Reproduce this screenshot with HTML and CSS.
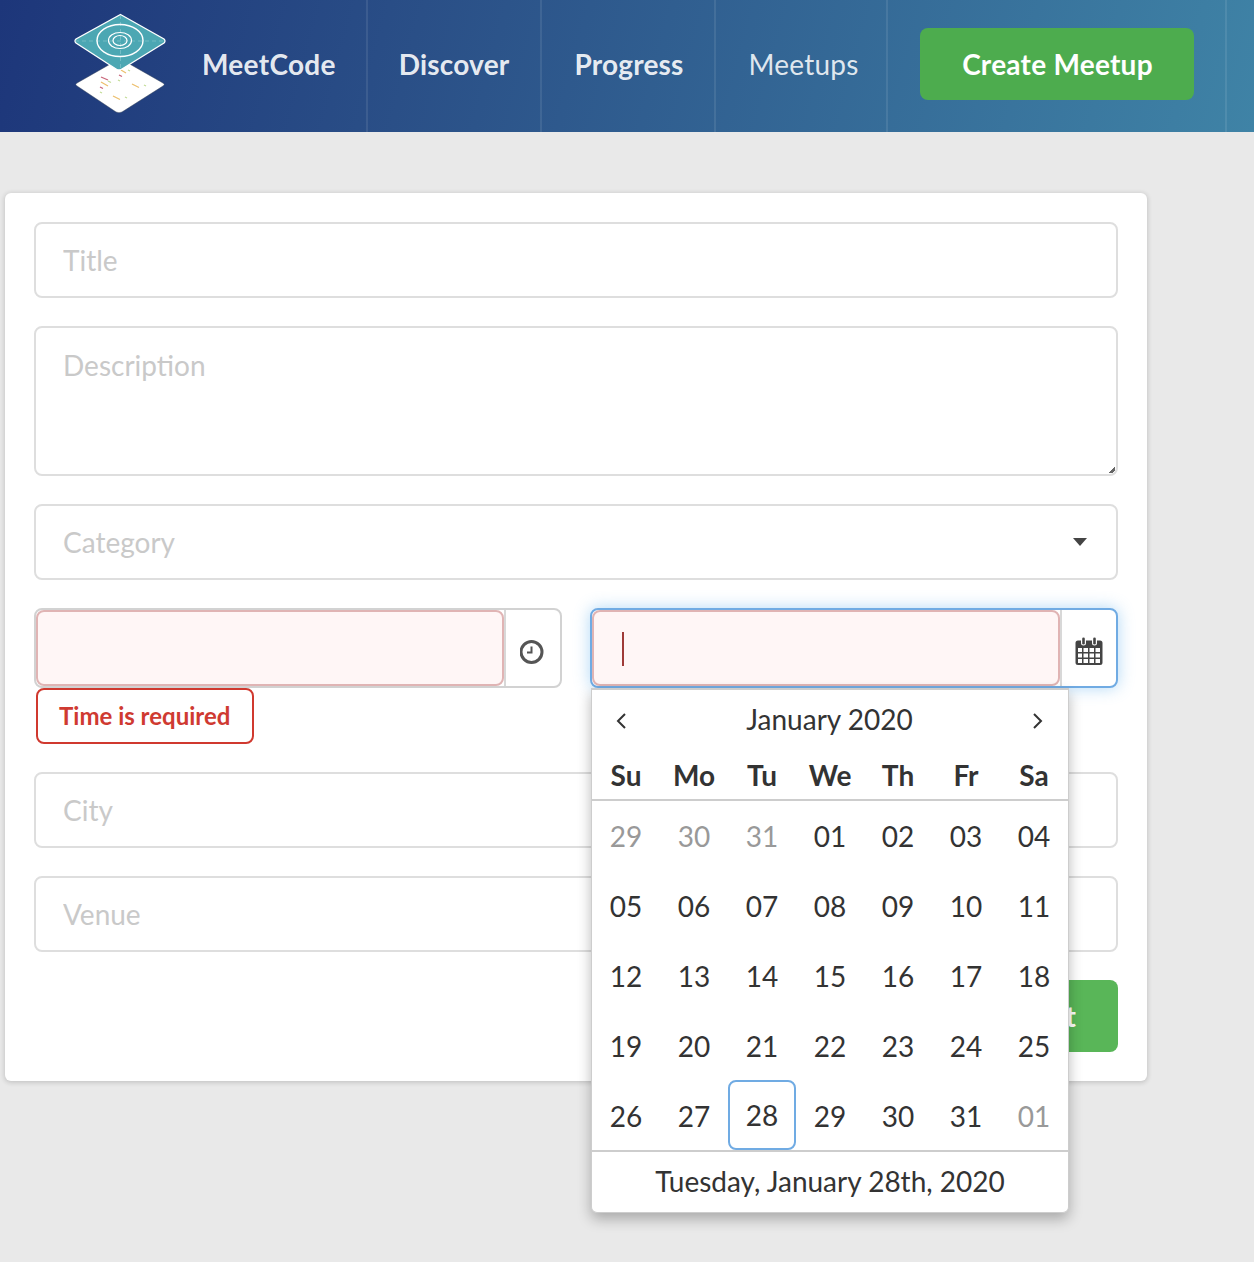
FILE: index.html
```html
<!DOCTYPE html>
<html lang="en">
<head>
<meta charset="utf-8">
<title>MeetCode</title>
<link rel="stylesheet" href="styles.css">
</head>
<body>
<nav class="nav">
  <a class="nav-item brand">
    <svg class="logo" width="92" height="102" viewBox="74 13 92 102">
      <path d="M120 58.500 L163 83 Q165.500 84.500 163 86 L122 112 Q119 113.500 116 112 L77 86 Q74.500 84.500 77 83 Z" fill="#fff" stroke="#2a3a55" stroke-width=".5"/>
      <g stroke-width="1.300" fill="none">
        <path d="M101 77 L108 80 M100 87 L103 88.500 M119 75 L122 76.500" stroke="#c9667a"/>
        <path d="M121 70 L126 73 M101 82 L108 86 M132 84 L139 87.500 M113 96 L120 99.500" stroke="#ecc06e"/>
        <path d="M108 81 L111 82.500 M118 80 L120 81 M144 85 L146 86 M100 92 L102 93 M125 97 L127 98 M128 70 L130 71" stroke="#c3dc96"/>
      </g>
      <path d="M120.500 14.500 L164 39 Q166 41 164 43 L122 69 Q119 71 116 69 L76 43 Q74 41 76 39 Z" fill="#4ca7b3" stroke="#fff" stroke-width="1.300"/>
      <path d="M120.500 15 V69 M75 41 H165" stroke="#8fcbd2" stroke-width=".6" stroke-dasharray="4 3" fill="none"/>
      <ellipse cx="120" cy="40.500" rx="23" ry="16" fill="none" stroke="#fff" stroke-width="1.400"/>
      <ellipse cx="120" cy="40.500" rx="11.500" ry="8" fill="none" stroke="#fff" stroke-width="1.200"/>
      <ellipse cx="120" cy="40.500" rx="7" ry="5" fill="none" stroke="#fff" stroke-width="1.200"/>
    </svg>
    <span class="brand-name">MeetCode</span>
  </a>
  <a class="nav-item nav-item-discover">Discover</a>
  <a class="nav-item nav-item-progress">Progress</a>
  <a class="nav-item nav-item-light">Meetups</a>
  <div class="nav-item"><button class="create-btn">Create Meetup</button></div>
</nav>

<main class="page">
  <form class="card">
    <input class="input" placeholder="Title">
    <textarea class="input textarea" placeholder="Description"></textarea>
    <div class="input select">
      <span class="select-text">Category</span>
      <span class="caret-down"></span>
    </div>
    <div class="row">
      <div class="field">
        <div class="group">
          <input class="group-input">
          <span class="group-btn">
            <svg width="26" height="26" viewBox="1.500 -1 26 26" fill="none" stroke="#555">
              <circle cx="13" cy="13" r="10.500" stroke-width="3"/>
              <path d="M13 7.500 V13.500 H8.500" stroke-width="2"/>
            </svg>
          </span>
        </div>
        <div class="error">Time is required</div>
      </div>
      <div class="field date-field">
        <div class="group group-focus">
          <input class="group-input">
          <span class="text-caret"></span>
          <span class="group-btn">
            <svg width="28" height="29" viewBox="0 0 28 29">
              <path fill="#444" fill-rule="evenodd" d="M3 3.500 H6 V6 a2.500 2.500 0 0 0 5 0 V3.500 H17 V6 a2.500 2.500 0 0 0 5 0 V3.500 H25 a2.500 2.500 0 0 1 2.500 2.500 V25.500 a2.500 2.500 0 0 1 -2.500 2.500 H3 a2.500 2.500 0 0 1 -2.500 -2.500 V6 a2.500 2.500 0 0 1 2.500 -2.500 Z M3 11 V15 H7 V11 Z M8.500 11 V15 H13 V11 Z M14.500 11 V15 H19 V11 Z M20.500 11 V15 H25 V11 Z M3 16.500 V20.500 H7 V16.500 Z M8.500 16.500 V20.500 H13 V16.500 Z M14.500 16.500 V20.500 H19 V16.500 Z M20.500 16.500 V20.500 H25 V16.500 Z M3 22 V26 H7 V22 Z M8.500 22 V26 H13 V22 Z M14.500 22 V26 H19 V22 Z M20.500 22 V26 H25 V22 Z"/>
              <rect x="7.200" y="0.500" width="2.600" height="7" rx="1.300" fill="#444"/>
              <rect x="18.200" y="0.500" width="2.600" height="7" rx="1.300" fill="#444"/>
            </svg>
          </span>
        </div>
        <div class="calendar">
          <div class="cal-head">
            <svg class="chev" width="12" height="18" viewBox="0 0 12 18" fill="none" stroke="#333" stroke-width="2"><path d="M10 2 L3 9 L10 16"/></svg>
            <span>January 2020</span>
            <svg class="chev" width="12" height="18" viewBox="0 0 12 18" fill="none" stroke="#333" stroke-width="2"><path d="M2 2 L9 9 L2 16"/></svg>
          </div>
          <div class="cal-weekdays">
            <span>Su</span><span>Mo</span><span>Tu</span><span>We</span><span>Th</span><span>Fr</span><span>Sa</span>
          </div>
          <div class="cal-grid">
            <span class="muted">29</span><span class="muted">30</span><span class="muted">31</span><span>01</span><span>02</span><span>03</span><span>04</span>
            <span>05</span><span>06</span><span>07</span><span>08</span><span>09</span><span>10</span><span>11</span>
            <span>12</span><span>13</span><span>14</span><span>15</span><span>16</span><span>17</span><span>18</span>
            <span>19</span><span>20</span><span>21</span><span>22</span><span>23</span><span>24</span><span>25</span>
            <span>26</span><span>27</span><span class="selected">28</span><span>29</span><span>30</span><span>31</span><span class="muted">01</span>
          </div>
          <div class="cal-foot">Tuesday, January 28th, 2020</div>
        </div>
      </div>
    </div>
    <input class="input" placeholder="City">
    <input class="input" placeholder="Venue">
    <div class="actions"><button type="button" class="submit">Submit</button></div>
  </form>
</main>
</body>
</html>
```

FILE: styles.css
```css
* { box-sizing: border-box; }
html, body { margin: 0; padding: 0; }
body {
  background: #e9e9e9;
  font-family: Lato, "Helvetica Neue", Arial, sans-serif;
  font-size: 28px;
  color: #333;
  height: 1262px;
  overflow: hidden;
}
.nav {
  display: flex;
  height: 132px;
  background: linear-gradient(105deg, #1d367a 0%, #2a4f87 33%, #3f83a6 100%);
}
.nav-item {
  display: flex;
  align-items: center;
  padding: 0 31px 4px 32px;
  border-right: 2px solid rgba(255, 255, 255, .09);
  color: rgba(255, 255, 255, .9);
  font-weight: 700;
  font-size: 28px;
  letter-spacing: .2px;
}
.nav-item-discover { padding-left: 31px; }
.nav-item-progress { padding-right: 30px; }
.nav-item-light { font-weight: 400; color: rgba(255, 255, 255, .85); padding-left: 33px; padding-right: 28px; }
.brand { padding-left: 74px; padding-right: 30px; gap: 36px; }
.brand-name { letter-spacing: .3px; }
.logo { display: block; }
.create-btn {
  width: 274px;
  height: 72px;
  border: 0;
  border-radius: 8px;
  background: #4dac4e;
  color: #fff;
  font: 700 28px Lato, sans-serif;
  letter-spacing: .25px;
}
.page { padding: 61px 107px 0 5px; }
.card {
  display: flex;
  flex-direction: column;
  gap: 28px;
  padding: 29px;
  background: #fff;
  border-radius: 6px;
  box-shadow: 0 1px 4px 1px rgba(34, 36, 38, .17);
}
.input {
  display: block;
  width: 100%;
  height: 76px;
  padding: 0 27px;
  background: #fff;
  border: 2px solid #dedede;
  border-radius: 8px;
  font: 28px Lato, sans-serif;
  color: #333;
  outline: 0;
}
.input::placeholder { color: #c9c9c9; opacity: 1; }
.textarea { height: 150px; padding-top: 20px; resize: vertical; }
.textarea::-webkit-resizer {
  background: linear-gradient(135deg, transparent 45%, #666 45%, #666 75%, transparent 75%) right 1px bottom 1px / 6px 6px no-repeat;
}
.select { display: flex; align-items: center; justify-content: space-between; padding-right: 29px; padding-bottom: 1px; }
.select-text { color: #c9c9c9; }
.caret-down {
  width: 0;
  height: 0;
  border-left: 7px solid transparent;
  border-right: 7px solid transparent;
  border-top: 8px solid #444;
  margin-top: 1px;
}
.row { display: flex; gap: 28px; align-items: flex-start; }
.field { flex: 1 1 0; min-width: 0; }
.date-field { position: relative; }
.group {
  position: relative;
  display: flex;
  height: 80px;
  border: 2px solid #d2d2d2;
  border-radius: 8px;
  background: #fff;
}
.group-focus {
  border-color: #70abe3;
  box-shadow: 0 0 16px rgba(82, 168, 236, .45);
}
.group-input {
  flex: 1 1 0;
  min-width: 0;
  background: #fff6f6;
  border: 2px solid #e0b4b4;
  border-radius: 8px;
  outline: 0;
  font: 28px Lato, sans-serif;
  color: #9f3a38;
}
.group-btn {
  display: flex;
  align-items: center;
  justify-content: center;
  width: 56px;
  flex: none;
  border-left: 2px solid #d8d8d8;
  padding-top: 6px;
}
.text-caret {
  position: absolute;
  left: 30px;
  top: 22px;
  width: 2px;
  height: 34px;
  background: #9f3a38;
}
.error {
  display: inline-block;
  margin: 0 0 0 2px;
  height: 56px;
  padding: 0 22px 0 21px;
  border: 2px solid #d0392f;
  border-radius: 8px;
  background: #fff;
  color: #cf3a31;
  font-size: 24px;
  font-weight: 700;
  line-height: 52px;
}
.calendar {
  position: absolute;
  z-index: 5;
  left: 1px;
  top: 80px;
  width: 478px;
  background: #fff;
  border: 1px solid #cdcdcd;
  border-top-width: 2px;
  border-radius: 0 0 6px 6px;
  box-shadow: 0 6px 14px rgba(0, 0, 0, .28);
  font-size: 28px;
}
.cal-head {
  display: flex;
  align-items: center;
  justify-content: space-between;
  height: 60px;
  padding: 0 24px 2px 23px;
}
.chev { display: block; margin-top: 4px; }
.cal-weekdays {
  display: grid;
  grid-template-columns: repeat(7, 68px);
  height: 51px;
  padding-top: 1px;
  align-items: center;
  text-align: center;
  font-weight: 700;
  border-bottom: 2px solid #cdcdcd;
}
.cal-grid {
  display: grid;
  grid-template-columns: repeat(7, 68px);
  grid-auto-rows: 70px;
  margin-top: -1px;
  text-align: center;
  line-height: 72px;
}
.muted { color: #999; }
.selected {
  border: 2px solid #70abe3;
  border-radius: 8px;
  line-height: 66px;
}
.cal-foot {
  height: 62px;
  line-height: 58px;
  text-align: center;
  border-top: 2px solid #cdcdcd;
}
.actions { display: flex; justify-content: flex-end; }
.submit {
  padding: 0 42px;
  height: 72px;
  border: 0;
  border-radius: 8px;
  background: #59b658;
  color: #fff;
  font: 700 28px Lato, sans-serif;
}
```
